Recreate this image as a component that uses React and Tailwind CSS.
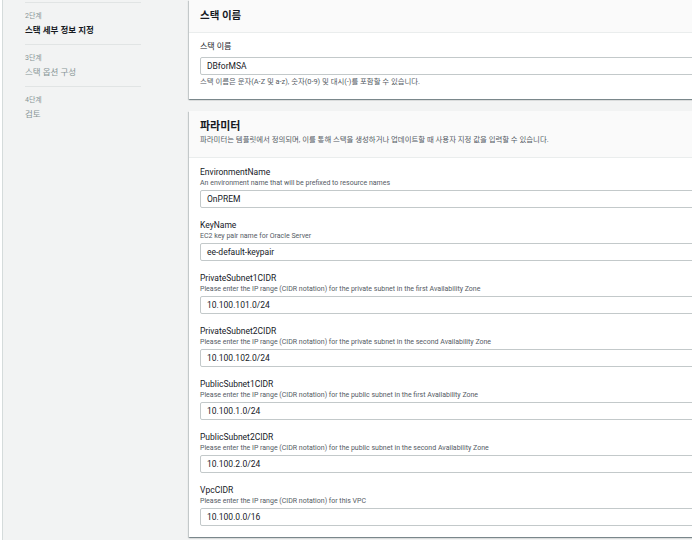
import React from "react";

const steps = [
  { step: "2단계", title: "스택 세부 정보 지정", active: true },
  { step: "3단계", title: "스택 옵션 구성" },
  { step: "4단계", title: "검토" },
];

const params = [
  { name: "EnvironmentName", desc: "An environment name that will be prefixed to resource names", value: "OnPREM" },
  { name: "KeyName", desc: "EC2 key pair name for Oracle Server", value: "ee-default-keypair" },
  { name: "PrivateSubnet1CIDR", desc: "Please enter the IP range (CIDR notation) for the private subnet in the first Availability Zone", value: "10.100.101.0/24" },
  { name: "PrivateSubnet2CIDR", desc: "Please enter the IP range (CIDR notation) for the private subnet in the second Availability Zone", value: "10.100.102.0/24" },
  { name: "PublicSubnet1CIDR", desc: "Please enter the IP range (CIDR notation) for the public subnet in the first Availability Zone", value: "10.100.1.0/24" },
  { name: "PublicSubnet2CIDR", desc: "Please enter the IP range (CIDR notation) for the public subnet in the second Availability Zone", value: "10.100.2.0/24" },
  { name: "VpcCIDR", desc: "Please enter the IP range (CIDR notation) for this VPC", value: "10.100.0.0/16" },
];

function Input({ value }) {
  return (
    <div className="h-[18px] w-full rounded-[2px] border border-[#c3c9ca] bg-white pl-[6px] flex items-center text-[8.5px] text-[#16191f]">
      {value}
    </div>
  );
}

export default function App() {
  return (
    <div className="w-[692px] h-[540px] overflow-hidden flex bg-[#f2f3f3] font-['Roboto','Noto_Sans_CJK_KR',sans-serif] text-[#16191f]">
      <div className="w-[2px] shrink-0 bg-white" />
      <div className="w-[187px] shrink-0 border-l border-[#d5dbdb] pl-[22px]">
        <div className="mt-[2px] h-px w-[116px] bg-[#e1e4e4]" />
        {steps.map((s) => (
          <div key={s.step}>
            <div className="pt-[8px] pb-[8px]">
              <div className="text-[7px] leading-[10px] text-[#879596]">{s.step}</div>
              <div
                className={
                  s.active
                    ? "mt-[4px] text-[8.5px] leading-[11px] font-bold text-[#16191f]"
                    : "mt-[4px] text-[8.5px] leading-[11px] text-[#879596]"
                }
              >
                {s.title}
              </div>
            </div>
            {s.step !== "4단계" && <div className="h-px w-[116px] bg-[#e1e4e4]" />}
          </div>
        ))}
      </div>
      <div className="flex flex-col gap-[12px] w-[560px] shrink-0">
        <div className="bg-white shadow-[0_1px_1px_0_rgba(0,28,36,0.3),1px_1px_1px_0_rgba(0,28,36,0.15),-1px_1px_1px_0_rgba(0,28,36,0.15)]">
          <div className="h-[33px] bg-[#fafafa] border-b border-[#eaeded] px-[11px] flex items-center text-[10.5px] font-bold">
            스택 이름
          </div>
          <div className="px-[11px] pt-[9px] pb-[12px]">
            <div className="text-[8px] leading-[10px]">스택 이름</div>
            <div className="mt-[5px]">
              <Input value="DBforMSA" />
            </div>
            <div className="mt-[2px] text-[7.4px] leading-[10px] text-[#545b64]">
              스택 이름은 문자(A-Z 및 a-z), 숫자(0-9) 및 대시(-)를 포함할 수 있습니다.
            </div>
          </div>
        </div>
        <div className="bg-white shadow-[0_1px_1px_0_rgba(0,28,36,0.3),1px_1px_1px_0_rgba(0,28,36,0.15),-1px_1px_1px_0_rgba(0,28,36,0.15)]">
          <div className="bg-[#fafafa] border-b border-[#eaeded] px-[11px] pt-[9px] pb-[12px]">
            <div className="text-[11px] leading-[13px] font-bold">파라미터</div>
            <div className="mt-[2px] text-[7.4px] leading-[10px] text-[#545b64]">
              파라미터는 템플릿에서 정의되며, 이를 통해 스택을 생성하거나 업데이트할 때 사용자 지정 값을 입력할 수 있습니다.
            </div>
          </div>
          <div className="px-[11px] pt-[8px] pb-[11px] flex flex-col gap-[11px]">
            {params.map((p) => (
              <div key={p.name}>
                <div className="text-[8.5px] leading-[12px]">{p.name}</div>
                <div className="text-[7px] leading-[10px] text-[#545b64]">{p.desc}</div>
                <div className="mt-[2px]">
                  <Input value={p.value} />
                </div>
              </div>
            ))}
          </div>
        </div>
      </div>
    </div>
  );
}
